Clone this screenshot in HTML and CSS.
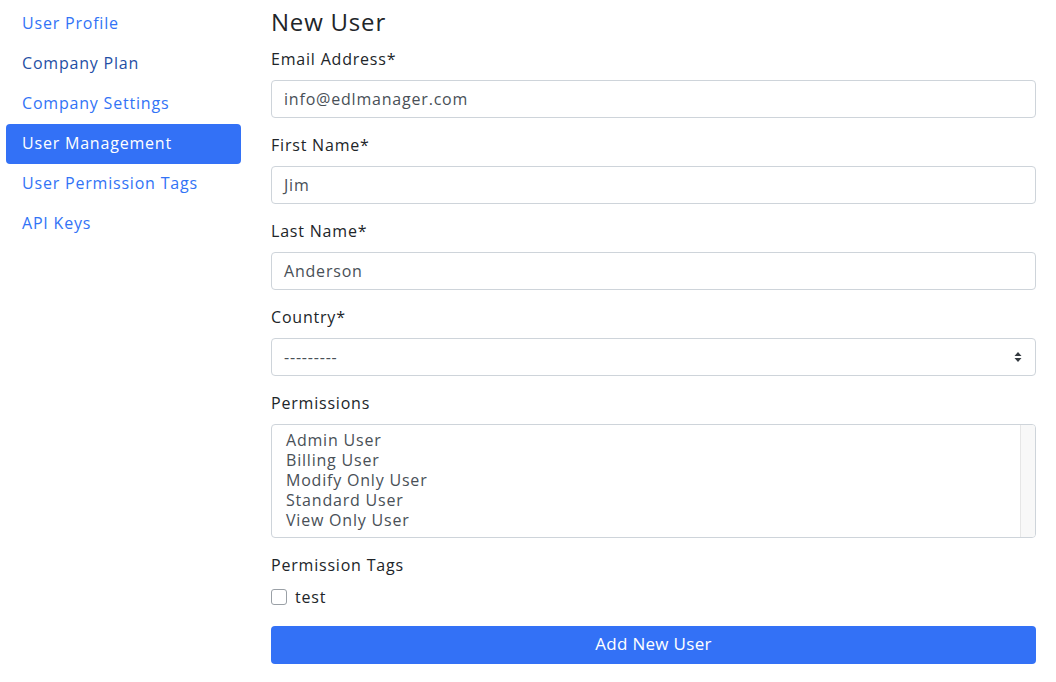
FILE: index.html
```html
<!DOCTYPE html>
<html>
<head>
<meta charset="utf-8">
<link rel="stylesheet" href="styles.css">
</head>
<body>
<div class="page">
  <nav class="sidenav">
    <a class="nav-link" href="#">User Profile</a>
    <a class="nav-link focus" href="#">Company Plan</a>
    <a class="nav-link" href="#">Company Settings</a>
    <a class="nav-link active" href="#">User Management</a>
    <a class="nav-link" href="#">User Permission Tags</a>
    <a class="nav-link" href="#">API Keys</a>
  </nav>
  <main class="main">
    <h2 class="title">New User</h2>
    <div class="group">
      <label class="label">Email Address*</label>
      <div class="control">info@edlmanager.com</div>
    </div>
    <div class="group">
      <label class="label">First Name*</label>
      <div class="control">Jim</div>
    </div>
    <div class="group">
      <label class="label">Last Name*</label>
      <div class="control">Anderson</div>
    </div>
    <div class="group">
      <label class="label">Country*</label>
      <div class="control select">
        <span>---------</span>
        <svg class="arrows" width="8" height="12" viewBox="0 0 8 12"><path d="M4 1 L7.5 5 L0.5 5 Z" fill="#343a40"/><path d="M4 11 L7.5 7 L0.5 7 Z" fill="#343a40"/></svg>
      </div>
    </div>
    <div class="group">
      <label class="label">Permissions</label>
      <div class="multi">
        <div class="options">
          <div class="opt">Admin User</div>
          <div class="opt">Billing User</div>
          <div class="opt">Modify Only User</div>
          <div class="opt">Standard User</div>
          <div class="opt">View Only User</div>
        </div>
        <div class="scrolltrack"></div>
      </div>
    </div>
    <div class="group tags">
      <label class="label">Permission Tags</label>
      <div class="check-row">
        <span class="checkbox"></span>
        <span class="check-label">test</span>
      </div>
    </div>
    <button class="btn">Add New User</button>
  </main>
</div>
</body>
</html>
```

FILE: styles.css
```css
* { box-sizing: border-box; }
html, body { margin: 0; padding: 0; background: #fff; }
body {
  font-family: "Open Sans", "DejaVu Sans", sans-serif;
  font-size: 16px;
  color: #212529;
  letter-spacing: 0.8px;
}
.page {
  display: flex;
  gap: 30px;
  padding: 4px 20px 0 6px;
}
.sidenav {
  width: 235px;
  flex: none;
  display: flex;
  flex-direction: column;
}
.nav-link {
  display: block;
  height: 40px;
  line-height: 24px;
  padding: 7px 16px 9px;
  color: #3273f6;
  text-decoration: none;
  border-radius: 4px;
  letter-spacing: 0.8px;
}
.nav-link.focus { color: #1f4fa5; }
.nav-link.active { background: #3371f6; color: #fff; }
.main {
  flex: 1;
  display: flex;
  flex-direction: column;
}
.title {
  margin: 3px 0 12px;
  font-size: 24px;
  font-weight: 400;
  line-height: 29px;
  color: #212529;
  letter-spacing: 0.8px;
}
.group { margin-bottom: 16px; }
.label {
  display: block;
  line-height: 24px;
  margin-top: -1px;
  margin-bottom: 9px;
}
.control {
  height: 38px;
  border: 1px solid #ced4da;
  border-radius: 4px;
  padding: 0 12px;
  display: flex;
  align-items: center;
  color: #495057;
}
.select { justify-content: space-between; padding-right: 13px; }
.multi {
  height: 114px;
  border: 1px solid #ced4da;
  border-radius: 4px;
  display: flex;
  overflow: hidden;
}
.options { flex: 1; padding: 5px 14px; }
.opt { line-height: 20px; color: #495057; }
.scrolltrack {
  width: 15px;
  background: #f8f8f8;
  border-left: 1px solid #e6e6e6;
}
.tags { margin-bottom: 17px; }
.check-row { display: flex; align-items: center; gap: 8px; height: 24px; margin-top: -1px; }
.checkbox {
  width: 16px; height: 16px;
  border: 1px solid #9aa0a6;
  border-radius: 3px;
  background: #fff;
}
.check-label { line-height: 24px; }
.btn {
  height: 38px;
  border: none;
  border-radius: 4px;
  background: #3371f6;
  color: #fff;
  font-family: inherit;
  font-size: 17px;
  letter-spacing: 0.3px;
  width: 100%;
  padding: 0 0 3px;
}
```
